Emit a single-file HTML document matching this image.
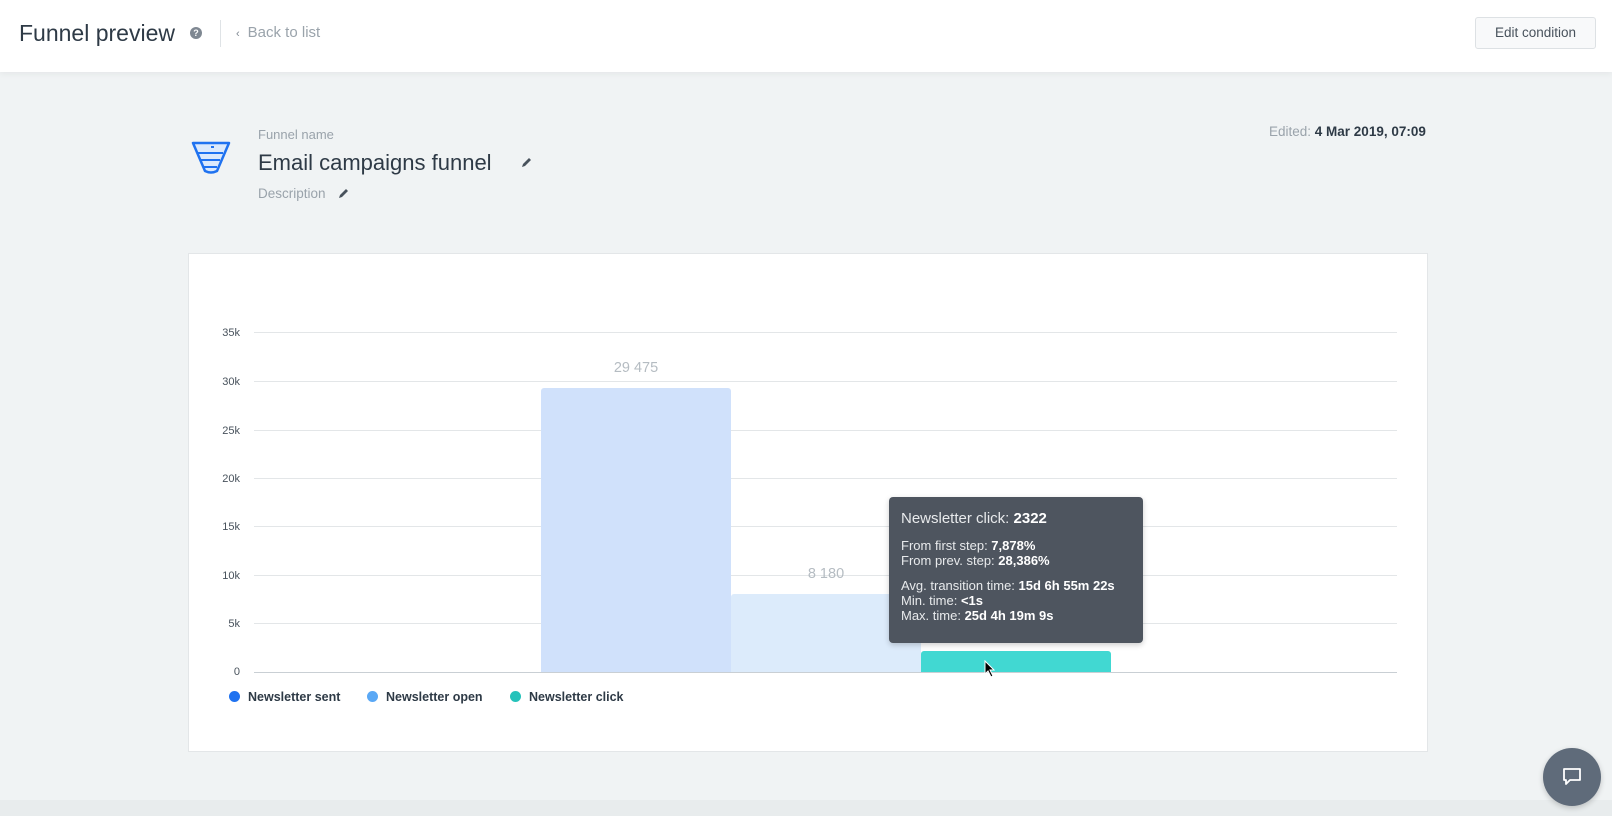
<!DOCTYPE html>
<html><head><meta charset="utf-8"><style>
*{box-sizing:border-box;margin:0;padding:0}
body{width:1612px;height:816px;overflow:hidden;background:#f0f3f4;font-family:"Liberation Sans",sans-serif;color:#2e3a46;position:relative}
.hdr{position:absolute;left:0;top:0;width:1612px;height:72px;background:#fff;box-shadow:0 2px 6px rgba(0,0,0,.05)}
.abs{position:absolute;white-space:nowrap}
.gl{position:absolute;height:1px;background:#e3e6e8}
.yl{position:absolute;font-size:11px;color:#48525c}
.tip{position:absolute;left:889px;top:497px;width:254px;height:146px;background:#4e555f;border-radius:4px;color:#e8eaec;font-size:13px;padding:13px 12px;box-shadow:0 2px 6px rgba(0,0,0,.2);line-height:15px}
.tip b{color:#fff}
.leg{position:absolute;top:690px;font-size:12.5px;font-weight:bold;color:#2e3a46}
.leg i{display:inline-block;width:11px;height:11px;border-radius:50%;vertical-align:-1px;margin-right:8px}
</style></head><body>
<div class="hdr">
<div class="abs" style="left:19px;top:20px;font-size:23px;color:#2e3a46">Funnel preview</div>
<div class="abs" style="left:190px;top:27px;width:12px;height:12px;border-radius:50%;background:#7f8892;color:#fff;font-size:9px;font-weight:bold;text-align:center;line-height:12px">?</div>
<div class="abs" style="left:220px;top:20px;width:1px;height:27px;background:#dfe3e6"></div>
<div class="abs" style="left:236px;top:24px;font-size:15px;color:#9aa3ab"><span style="font-size:11px;margin-right:8px;color:#7f8892">&#8249;</span>Back to list</div>
<div class="abs" style="left:1475px;top:17px;width:121px;height:32px;border:1px solid #dde1e4;border-radius:3px;background:#f8f9fa;font-size:13.5px;text-align:center;line-height:30px;color:#48525c">Edit condition</div>
</div>
<svg class="abs" style="left:191px;top:141px" width="42" height="36" viewBox="0 0 42 36"><path d="M2 2H38L26 30Q20 33 14 30Z" fill="#dbe9fc" stroke="#1f72f0" stroke-width="2.5" stroke-linejoin="round"/><path d="M7 12H32M10 19H29M13 26H26" stroke="#1f72f0" stroke-width="2"/><path d="M20 6h3" stroke="#1f72f0" stroke-width="2"/></svg>
<div class="abs" style="left:258px;top:127px;font-size:13px;color:#9aa3ab">Funnel name</div>
<div class="abs" style="left:258px;top:150px;font-size:22px;color:#2e3a46">Email campaigns funnel</div>
<svg class="abs" style="left:521px;top:157px" width="11" height="11" viewBox="0 0 11 11"><path d="M1 10L2 7L8 1L10 3L4 9Z" fill="#48525c"/></svg>
<div class="abs" style="left:258px;top:186px;font-size:13.5px;color:#9aa3ab">Description</div>
<svg class="abs" style="left:338px;top:188px" width="11" height="11" viewBox="0 0 11 11"><path d="M1 10L2 7L8 1L10 3L4 9Z" fill="#48525c"/></svg>
<div class="abs" style="left:1269px;top:124px;font-size:13.5px;color:#9aa3ab">Edited: <b style="color:#2e3a46">4 Mar 2019, 07:09</b></div>
<div class="abs" style="left:188px;top:253px;width:1240px;height:499px;background:#fff;border:1px solid #e3e6e8"></div>
<div class="gl" style="top:332px;left:254px;width:1143px"></div>
<div class="gl" style="top:381px;left:254px;width:1143px"></div>
<div class="gl" style="top:430px;left:254px;width:1143px"></div>
<div class="gl" style="top:478px;left:254px;width:1143px"></div>
<div class="gl" style="top:526px;left:254px;width:1143px"></div>
<div class="gl" style="top:575px;left:254px;width:1143px"></div>
<div class="gl" style="top:623px;left:254px;width:1143px"></div>
<div class="gl" style="top:672px;left:254px;width:1143px;background:#c9cfd4"></div>
<div class="yl" style="top:327px;right:1372px">35k</div>
<div class="yl" style="top:376px;right:1372px">30k</div>
<div class="yl" style="top:425px;right:1372px">25k</div>
<div class="yl" style="top:473px;right:1372px">20k</div>
<div class="yl" style="top:521px;right:1372px">15k</div>
<div class="yl" style="top:570px;right:1372px">10k</div>
<div class="yl" style="top:618px;right:1372px">5k</div>
<div class="yl" style="top:666px;right:1372px">0</div>
<div class="abs" style="left:541px;top:388px;width:190px;height:284px;background:#d0e1fb;border-radius:3px 3px 0 0"></div>
<div class="abs" style="left:731px;top:594px;width:190px;height:78px;background:#dcebfb;border-radius:3px 3px 0 0"></div>
<div class="abs" style="left:921px;top:651px;width:190px;height:21px;background:#41d8d2;border-radius:3px 3px 0 0"></div>
<div class="abs" style="left:541px;top:360px;width:190px;text-align:center;font-size:14.5px;color:#b5bcc2">29 475</div>
<div class="abs" style="left:731px;top:566px;width:190px;text-align:center;font-size:14.5px;color:#b5bcc2">8 180</div>
<div class="tip">
<div style="font-size:15px;margin-bottom:10px;line-height:18px">Newsletter click: <b>2322</b></div>
<div>From first step: <b>7,878%</b></div>
<div>From prev. step: <b>28,386%</b></div>
<div style="margin-top:10px">Avg. transition time: <b>15d 6h 55m 22s</b></div>
<div>Min. time: <b>&lt;1s</b></div>
<div>Max. time: <b>25d 4h 19m 9s</b></div>
</div>
<svg class="abs" style="left:984px;top:660px" width="12" height="18" viewBox="0 0 12 18"><path d="M1 1V14L4 11L7 17L9 16L6 10H10Z" fill="#000" stroke="#fff" stroke-width="1"/></svg>
<div class="leg" style="left:229px"><i style="background:#1f72f0"></i>Newsletter sent</div>
<div class="leg" style="left:367px"><i style="background:#5aa8f5"></i>Newsletter open</div>
<div class="leg" style="left:510px"><i style="background:#25c2ba"></i>Newsletter click</div>
<div class="abs" style="left:0;top:800px;width:1612px;height:16px;background:#e8eced"></div>
<div class="abs" style="left:1543px;top:748px;width:58px;height:58px;border-radius:50%;background:#5f6b7a;box-shadow:0 2px 6px rgba(0,0,0,.2)"></div>
<svg class="abs" style="left:1561px;top:766px" width="22" height="22" viewBox="0 0 22 22"><path d="M3 3H19V14H9L5 18V14H3Z" fill="none" stroke="#fff" stroke-width="1.8" stroke-linejoin="round"/></svg>
</body></html>
